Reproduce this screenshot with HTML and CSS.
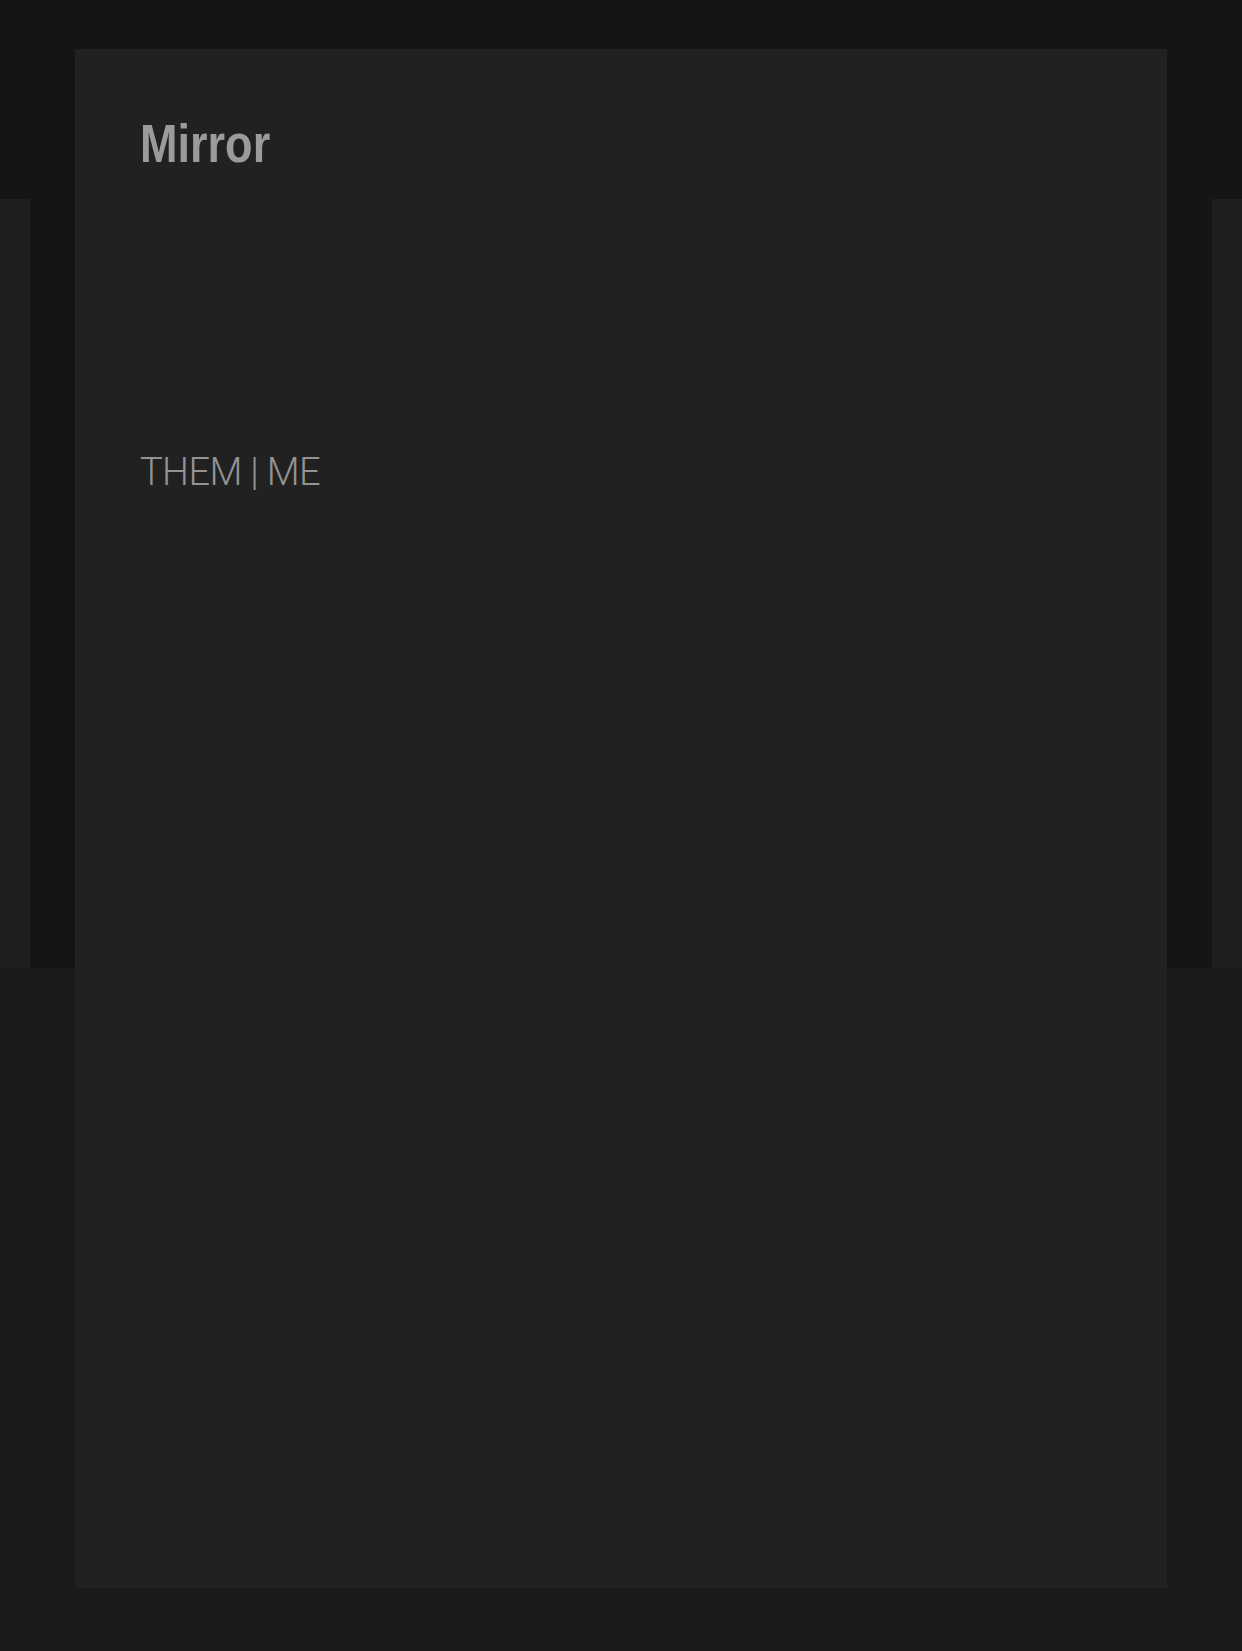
FILE: index.html
```html
<!DOCTYPE html>
<html>
<head>
<meta charset="utf-8">
<link rel="stylesheet" href="styles.css">
</head>
<body>
<div class="stage">
  <div class="backdrop">
    <div class="side"></div>
    <div class="side"></div>
  </div>
  <div class="card">
    <h1 class="title">Mirror</h1>
    <p class="sub">THEM <span class="pipe">|</span> ME</p>
  </div>
</div>
</body>
</html>
```
FILE: styles.css
```css
html, body {
  margin: 0;
  padding: 0;
  background: #1a1a1a;
}
.stage {
  display: grid;
  width: 1242px;
  height: 1651px;
}
.backdrop {
  grid-area: 1 / 1;
  height: 968px;
  background: #151515;
  display: flex;
  justify-content: space-between;
  align-items: flex-end;
}
.side {
  width: 30px;
  height: 769px;
  background: #1e1e1e;
}
.card {
  grid-area: 1 / 1;
  align-self: start;
  margin: 49px 75px 0 75px;
  height: 1539px;
  background: #212121;
  padding: 0 0 0 65px;
  box-sizing: border-box;
  display: flex;
  flex-direction: column;
  align-items: flex-start;
}
.title {
  margin: 0;
  margin-top: 65px;
  font-family: "Liberation Sans", sans-serif;
  font-weight: 700;
  font-size: 53px;
  line-height: 60px;
  color: #9b9b9b;
  transform: scaleX(0.85);
  transform-origin: 0 50%;
}
.sub {
  margin: 0;
  margin-top: 276px;
  font-family: "Roboto", "Liberation Sans", sans-serif;
  font-weight: 300;
  font-size: 38px;
  line-height: 44px;
  color: #939393;
  letter-spacing: -0.6px;
}
.pipe {
  font-weight: 300;
}
```
